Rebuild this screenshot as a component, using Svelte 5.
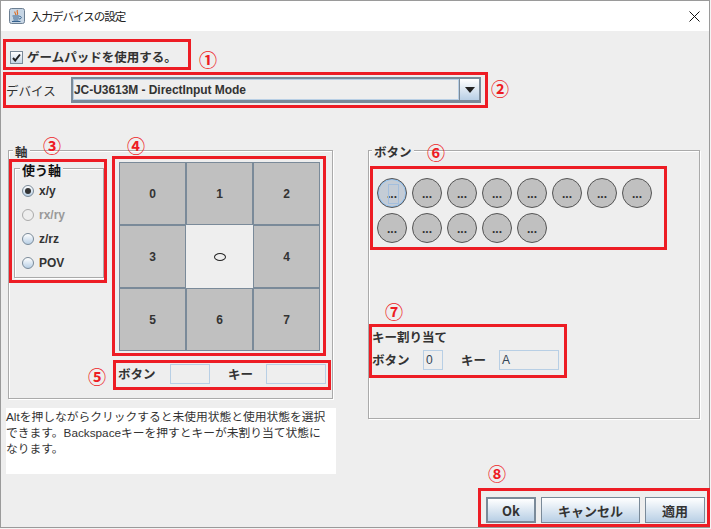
<script>
  // red annotation frames and circled numbers drawn on top of the dialog
  const frames = [
    { x: 3, y: 39, w: 188, h: 31 },
    { x: 3, y: 72, w: 485, h: 36 },
    { x: 9, y: 159, w: 98, h: 124 },
    { x: 112, y: 156, w: 214, h: 200 },
    { x: 113, y: 360, w: 218, h: 30 },
    { x: 370, y: 166, w: 297, h: 84 },
    { x: 369, y: 324, w: 198, h: 54 },
    { x: 478, y: 488, w: 232, h: 39 }
  ]
  const marks = [
    { t: '①', x: 208, y: 59 },
    { t: '②', x: 500, y: 88 },
    { t: '③', x: 52, y: 145 },
    { t: '④', x: 136, y: 145 },
    { t: '⑤', x: 97, y: 376 },
    { t: '⑥', x: 436, y: 152 },
    { t: '⑦', x: 394, y: 311 },
    { t: '⑧', x: 497, y: 473 }
  ]

  const cells = ['0', '1', '2', '3', null, '4', '5', '6', '7']
  const axes = [
    { label: 'x/y', on: true },
    { label: 'rx/ry', off: true },
    { label: 'z/rz' },
    { label: 'POV' }
  ]
  const roundButtons = Array.from({ length: 13 }, (_, i) => i)
</script>

<div class="page">
  <div class="window">
    <header class="title">
      <svg class="java" viewBox="0 0 16 16" width="16" height="16">
        <rect x="0.5" y="0.5" width="15" height="15" rx="2" fill="#c6d5e4" stroke="#6c7f92" />
        <path d="M8.5 2 C7 4 10 4.5 8 7 M6 3.5 C5 5 7.5 5.5 6.5 7" fill="none" stroke="#d9702a" stroke-width="1.2" />
        <path d="M3.5 8 H10.5 M4 10 H10 M4.5 12 H9.5 M3 13.5 H11.5 M10.5 8.5 C13 8 13 11 10 11" fill="none" stroke="#35618d" stroke-width="1" />
      </svg>
      <span class="title-text">入力デバイスの設定</span>
      <svg class="close" viewBox="0 0 11 11" width="11" height="11">
        <path d="M0.5 0.5 L10.5 10.5 M10.5 0.5 L0.5 10.5" stroke="#111" stroke-width="1" />
      </svg>
    </header>

    <main class="body">
      <label class="check-row">
        <span class="check">
          <svg viewBox="0 0 9 9" width="9" height="9"><path d="M1 5 L3.2 7.5 L8 1.5" fill="none" stroke="#222" stroke-width="2" /></svg>
        </span>
        <span class="strong">ゲームパッドを使用する。</span>
      </label>

      <div class="device-row">
        <span class="device-label">デバイス</span>
        <div class="combo">
          <div class="combo-text">JC-U3613M - DirectInput Mode</div>
          <div class="combo-arrow"><span class="tri"></span></div>
        </div>
      </div>

      <div class="panels">
        <div class="left">
          <section class="group axis">
            <span class="legend plain">軸</span>
            <div class="axis-inner">
              <section class="group use-axis">
                <span class="legend bold">使う軸</span>
                <div class="radios">
                  {#each axes as a}
                    <div class="radio-row" class:off={a.off}>
                      <span class="radio" class:on={a.on}></span>
                      <span>{a.label}</span>
                    </div>
                  {/each}
                </div>
              </section>
              <div class="pad-col">
                <div class="pad">
                  {#each cells as c}
                    {#if c === null}
                      <div class="cell center"><span class="ring"></span></div>
                    {:else}
                      <div class="cell">{c}</div>
                    {/if}
                  {/each}
                </div>
                <div class="axis-keys">
                  <span class="strong w52">ボタン</span>
                  <span class="field w40"></span>
                  <span class="strong w38 ml18">キー</span>
                  <span class="field w60"></span>
                </div>
              </div>
            </div>
          </section>
          <p class="help">
            Altを押しながらクリックすると未使用状態と使用状態を選択<br />
            できます。Backspaceキーを押すとキーが未割り当て状態に<br />
            なります。
          </p>
        </div>

        <section class="group buttons-group">
          <span class="legend plain">ボタン</span>
          <div class="rounds">
            {#each roundButtons as n}
              <div class="round" class:focus={n === 0}>...</div>
            {/each}
          </div>
          <div class="assign">
            <div class="strong">キー割り当て</div>
            <div class="assign-row">
              <span class="strong w51">ボタン</span>
              <span class="field w20">0</span>
              <span class="strong w38 ml18">キー</span>
              <span class="field w60">A</span>
            </div>
          </div>
        </section>
      </div>

      <footer class="actions">
        <button class="btn default w50">Ok</button>
        <button class="btn w99">キャンセル</button>
        <button class="btn w60">適用</button>
      </footer>
    </main>
  </div>

  {#each frames as f}
    <div class="frame" style="left:{f.x}px;top:{f.y}px;width:{f.w}px;height:{f.h}px"></div>
  {/each}
  {#each marks as m}
    <span class="mark" style="left:{m.x}px;top:{m.y}px">{m.t}</span>
  {/each}
</div>

<style>
  :global(body) {
    margin: 0;
    background: #f4f4f4;
  }
  .page {
    position: relative;
    width: 711px;
    height: 529px;
    overflow: hidden;
    font-family: "Liberation Sans", "Noto Sans CJK JP", sans-serif;
    color: #333;
    font-size: 12px;
  }
  .window {
    box-sizing: border-box;
    width: 710px;
    height: 528px;
    border: 1px solid #9a9a9a;
    display: flex;
    flex-direction: column;
    background: #eee;
  }

  .title {
    height: 30px;
    flex: none;
    background: #fff;
    display: flex;
    align-items: center;
    padding-left: 8px;
    padding-right: 9px;
  }
  .title-text {
    margin-left: 6px;
    font-size: 11.5px;
    letter-spacing: -1px;
    color: #222;
    font-family: "Noto Sans CJK JP", sans-serif;
  }
  .java { flex: none; }
  .close { margin-left: auto; }

  .body {
    flex: 1;
    display: flex;
    flex-direction: column;
    min-height: 0;
  }

  .strong {
    font-family: "Noto Sans CJK JP", sans-serif;
    font-weight: 700;
    font-size: 12.5px;
    line-height: 16px;
    white-space: nowrap;
  }

  .check-row {
    display: flex;
    align-items: center;
    height: 16px;
    margin-top: 18px;
    padding-left: 9px;
    gap: 4px;
  }
  .check {
    box-sizing: border-box;
    width: 13px;
    height: 13px;
    border: 1px solid #7a8a99;
    background: linear-gradient(#fff, #c4d5e6);
    display: grid;
    place-items: center;
  }

  .device-row {
    display: flex;
    align-items: center;
    height: 26px;
    margin-top: 12px;
    padding-left: 5px;
  }
  .device-label {
    width: 65px;
    font-family: "Noto Sans CJK JP", sans-serif;
    font-size: 12.5px;
  }
  .combo {
    box-sizing: border-box;
    width: 410px;
    height: 26px;
    border: 2px solid #7a8a99;
    border-bottom-width: 3px;
    display: flex;
    background: #eee;
  }
  .combo-text {
    flex: 1;
    border: 1px solid #b8cfe5;
    font-weight: 700;
    font-size: 12px;
    letter-spacing: -0.05px;
    line-height: 21px;
  }
  .combo-arrow {
    width: 19px;
    background: linear-gradient(#fff, #b8cfe5);
    border-left: 1px solid #7a8a99;
    display: grid;
    place-items: center;
  }
  .tri {
    width: 0;
    height: 0;
    border: 5px solid transparent;
    border-top: 6px solid #222;
    border-bottom: 0;
  }

  .panels {
    display: flex;
    gap: 32px;
    margin-top: 47px;
    padding-left: 5px;
  }
  .left { width: 330px; }

  .group {
    box-sizing: border-box;
    border: 1px solid #aaa;
    box-shadow: inset 1px 1px #fff, 1px 1px #fff;
  }
  .legend {
    display: block;
    width: fit-content;
    height: 14px;
    margin: -6px 0 0 4px;
    padding: 0 2px;
    background: #eee;
    line-height: 14px;
    white-space: nowrap;
    font-family: "Noto Sans CJK JP", sans-serif;
  }
  .legend.plain { font-size: 12.5px; font-weight: 700; }
  .legend.bold { font-size: 13px; font-weight: 700; color: #111; margin-left: 5px; }
  .buttons-group .legend { margin-left: 3px; }

  .axis {
    width: 325px;
    height: 249px;
    margin-left: 2px;
  }
  .axis-inner {
    display: flex;
    align-items: flex-start;
    padding: 3px 0 0 5px;
  }
  .use-axis {
    width: 90px;
    height: 110px;
    margin-top: 6px;
  }
  .radios { padding: 2px 0 0 7px; }
  .radio-row {
    display: flex;
    align-items: center;
    gap: 5px;
    height: 24px;
    font-weight: 700;
    font-size: 12px;
  }
  .radio-row.off { color: #999; }
  .radio {
    box-sizing: border-box;
    width: 12px;
    height: 12px;
    border-radius: 50%;
    border: 1px solid #7a8a99;
    background: linear-gradient(#fff, #b8cfe5);
    display: grid;
    place-items: center;
  }
  .radio.on::after {
    content: "";
    width: 6px;
    height: 6px;
    border-radius: 50%;
    background: #333;
  }
  .off .radio {
    background: #eee;
    border-color: #aaa;
  }

  .pad-col { margin-left: 15px; }
  .pad {
    display: grid;
    grid-template-columns: repeat(3, 67px);
    grid-template-rows: repeat(3, 63px);
    width: 201px;
  }
  .cell {
    box-sizing: border-box;
    border: 1px solid #7a8a99;
    background: #c0c0c0;
    display: grid;
    place-items: center;
    font-weight: 700;
    font-size: 12px;
  }
  .cell.center {
    background: #eee;
    border: 0;
  }
  .ring {
    box-sizing: border-box;
    width: 12px;
    height: 8px;
    border: 1.5px solid #222;
    border-radius: 50%;
  }
  .axis-keys {
    display: flex;
    align-items: center;
    height: 20px;
    margin: 13px 0 0 -1px;
  }

  .field {
    box-sizing: border-box;
    height: 20px;
    border: 1px solid #b8cfe5;
    line-height: 18px;
    padding-left: 2px;
    font-size: 12px;
    color: #345;
  }
  .w20 { width: 20px; }
  .w38 { width: 38px; }
  .w40 { width: 40px; }
  .w50 { width: 50px; }
  .w51 { width: 51px; }
  .w52 { width: 52px; }
  .w60 { width: 60px; }
  .w99 { width: 99px; }
  .ml18 { margin-left: 18px; }

  .help {
    margin: 9px 0 0;
    width: 330px;
    height: 66px;
    background: #fff;
    font-size: 11.75px;
    line-height: 16px;
    white-space: nowrap;
    padding-top: 1px;
    box-sizing: border-box;
  }

  .buttons-group {
    width: 332px;
    height: 269px;
  }
  .rounds {
    display: flex;
    flex-wrap: wrap;
    gap: 5px;
    width: 275px;
    margin: 19px 0 0 8px;
  }
  .round {
    box-sizing: border-box;
    width: 30px;
    height: 30px;
    border-radius: 50%;
    border: 1.5px solid #555;
    background: #c0c0c0;
    display: grid;
    place-items: center;
    font-weight: 700;
    font-size: 12px;
    line-height: 12px;
    padding-top: 2px;
    position: relative;
  }
  .round.focus {
    box-shadow: inset 0 0 0 1px #8fc0f0;
    background: #c4ccd6;
  }
  .round.focus::before {
    content: "";
    position: absolute;
    left: 10px;
    top: 5px;
    width: 9px;
    height: 18px;
    border: 1px solid #a3bedd;
  }
  .assign {
    margin: 86px 0 0 3px;
  }
  .assign-row {
    display: flex;
    align-items: center;
    height: 20px;
    margin-top: 5px;
  }

  .actions {
    margin-top: auto;
    display: flex;
    justify-content: flex-end;
    gap: 5px;
    padding: 0 4px 4px 0;
  }
  .btn {
    box-sizing: border-box;
    height: 26px;
    padding: 0;
    border: 1px solid #7a8a99;
    background: linear-gradient(#fff, #b8cfe5);
    font-family: "Noto Sans CJK JP", sans-serif;
    font-weight: 700;
    font-size: 13px;
    color: #333;
  }
  .btn.default { border-width: 2px; }

  .frame {
    position: absolute;
    box-sizing: border-box;
    border: 3px solid #ed1c24;
  }
  .mark {
    position: absolute;
    transform: translate(-50%, -50%);
    color: #ed1c24;
    font-family: "Noto Sans CJK JP", sans-serif;
    font-weight: 700;
    font-size: 18px;
    line-height: 18px;
  }
</style>
